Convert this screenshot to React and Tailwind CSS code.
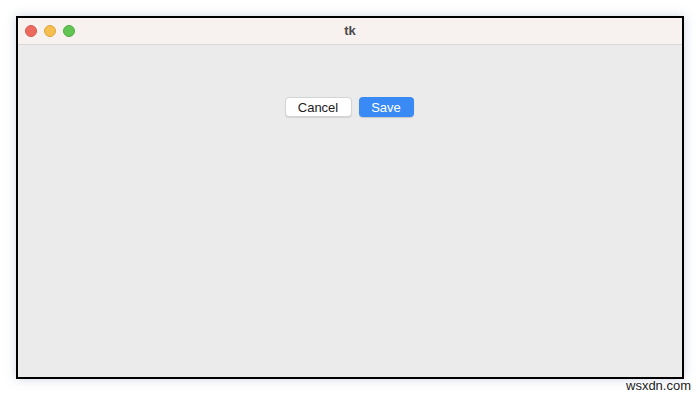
import React from "react";

export default function App() {
  return (
    <div className="relative w-[700px] h-[395px] bg-white overflow-hidden" style={{ fontFamily: '"Liberation Sans", Arial, sans-serif' }}>
      <div className="absolute left-[16px] top-[16px] w-[668px] h-[363px] border-2 border-black bg-[#ebebeb] flex flex-col shadow-[0_0_10px_rgba(120,140,170,0.35)]">
        <div className="relative h-[27px] bg-[#f7f1f0] border-b border-[#dcd8d7] flex items-center justify-center">
          <div className="absolute left-[7px] top-[7px] flex gap-[7px]">
            <div className="w-[12px] h-[12px] rounded-full bg-[#ec6a5e] border border-[#d65a4f]" />
            <div className="w-[12px] h-[12px] rounded-full bg-[#f4bf4f] border border-[#dda63c]" />
            <div className="w-[12px] h-[12px] rounded-full bg-[#61c554] border border-[#52ad45]" />
          </div>
          <span className="text-[13px] font-bold text-[#4a4a4a]">tk</span>
        </div>
        <div className="flex justify-center gap-[7px] pt-[52px] pr-[2px]">
          <button className="w-[67px] h-[20px] rounded-[4px] bg-white border border-[#d4d4d4] shadow-[0_1px_1px_rgba(0,0,0,0.1)] text-[13px] text-[#222] leading-none">Cancel</button>
          <button className="w-[55px] h-[20px] rounded-[4px] bg-[#3a8af5] shadow-[0_1px_1px_rgba(0,0,0,0.15)] text-[13px] text-white leading-none">Save</button>
        </div>
      </div>
      <span className="absolute left-[626px] top-[376px] text-[13px] text-[#222]">wsxdn.com</span>
    </div>
  );
}
